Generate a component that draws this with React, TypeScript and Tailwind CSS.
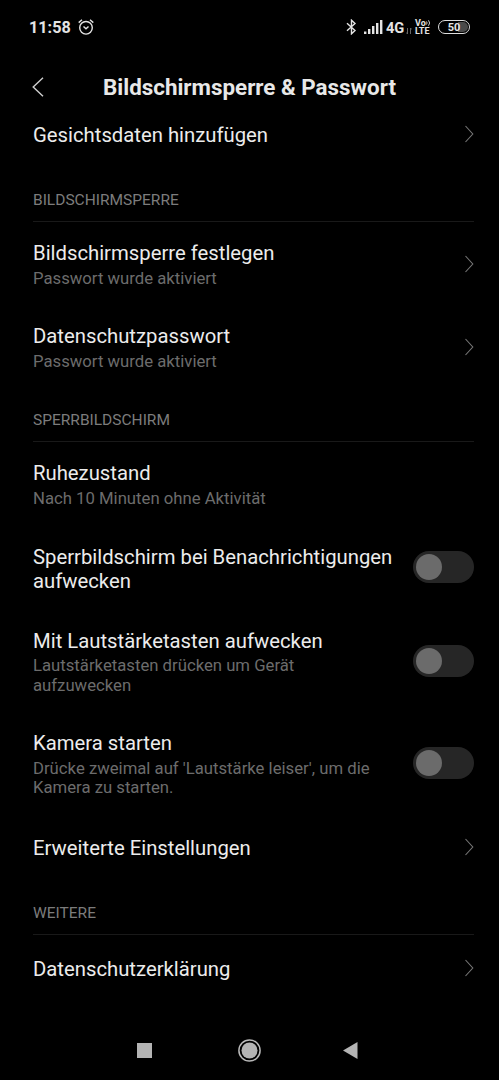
import { useState } from 'react'

type RowProps = {
  title: string
  text?: string
  className: string
}

const Chevron = () => (
  <svg className="mb-[2px] h-[18px] w-[10px] shrink-0" viewBox="0 0 10 18" fill="none" stroke="#777777" strokeWidth="1.1">
    <path d="M1.5 1L8.8 9L1.5 17" />
  </svg>
)

const RowText = ({ title, text }: { title: string; text?: string }) => (
  <div className="min-w-0">
    <h2 className="text-[20.3px] leading-6 text-[#ececec]">{title}</h2>
    {text && <p className="mt-[3.5px] text-[16.72px] leading-[19.5px] text-[#6c6c6c]">{text}</p>}
  </div>
)

const LinkRow = ({ title, text, className }: RowProps) => (
  <div className={`flex shrink-0 items-center justify-between ${className}`}>
    <RowText title={title} text={text} />
    <Chevron />
  </div>
)

const SwitchRow = ({ title, text, className }: RowProps) => {
  const [on, setOn] = useState(false)

  return (
    <div className={`flex shrink-0 items-center justify-between ${className}`}>
      <div className="w-[362px] pt-[3px]">
        <RowText title={title} text={text} />
      </div>
      <button
        type="button"
        role="switch"
        aria-checked={on}
        aria-label={title}
        onClick={() => setOn(!on)}
        className={`flex h-8 w-[61px] shrink-0 items-center rounded-full bg-[#262626] px-[3px] ${on ? 'justify-end' : 'justify-start'}`}
      >
        <span className="h-[26px] w-[26px] rounded-full bg-[#6b6b6b]" />
      </button>
    </div>
  )
}

const Section = ({ label }: { label: string }) => (
  <div className="flex h-[54px] shrink-0 items-end border-b border-[#191919] pb-[11px]">
    <h3 className="text-[15.5px] leading-5 text-[#7c7c7c]">{label}</h3>
  </div>
)

const StatusBar = () => (
  <div className="flex h-[54px] shrink-0 items-center justify-between pr-[29px] pl-[29px] text-[#e4e4e4]">
    <div className="flex items-center gap-[7px]">
      <span className="pt-px text-[16.2px] leading-5 font-bold">11:58</span>
      <svg className="h-4 w-4" viewBox="0 0 16 16" fill="none" stroke="currentColor" strokeWidth="1.4">
        <circle cx="8" cy="8.8" r="6.3" />
        <path d="M5.5 7.4L8 9.8L10.5 7.4M0.7 3.6L4 0.8M15.3 3.6L12 0.8" />
      </svg>
    </div>
    <div className="flex items-center">
      <svg className="h-4 w-[11px]" viewBox="0 0 11 16" fill="none" stroke="currentColor" strokeWidth="1.4">
        <path d="M1 4.2L9 11.5L5.5 14.8V1.2L9 4.5L1 11.8" />
      </svg>
      <svg className="ml-[7px] h-[14px] w-[19px]" viewBox="0 0 19 14" fill="currentColor">
        <path d="M0 11.5h2.4V14H0zM4 9h2.4v5H4zM8 6h2.4v8H8zM12 3h2.4v11H12zM16 0h2.4v14H16z" />
      </svg>
      <span className="ml-[3px] w-[18px] pt-px text-[14.6px] leading-5 font-bold">4G</span>
      <svg className="mt-[7px] ml-[2px] h-[6px] w-[6px]" viewBox="0 0 6 6" fill="none" stroke="#666666" strokeWidth="1">
        <path d="M1.5 0V6M0.2 4.5L1.5 6M4.5 6V0M5.8 1.5L4.5 0" />
      </svg>
      <div className="ml-[3px] flex w-[16px] flex-col text-[9px] leading-[8px] font-bold">
        <span className="flex items-center">
          Vo
          <svg className="h-[6px] w-[5px] shrink-0" viewBox="0 0 5 6" fill="none" stroke="currentColor" strokeWidth="0.9">
            <path d="M0.5 1.5Q1.7 3 0.5 4.5M2.5 0.3Q4.8 3 2.5 5.7" />
          </svg>
        </span>
        <span>LTE</span>
      </div>
      <div className="ml-[7px] flex h-[14px] w-[32px] items-center justify-center rounded-full border-[1.5px] border-[#dddddd] p-[1px]">
        <span className="flex h-full w-full items-center justify-center rounded-full bg-linear-to-r from-black from-65% to-[#4a4a4a] to-65% text-[11px] leading-none font-bold">50</span>
      </div>
    </div>
  </div>
)

const NavBar = () => (
  <div className="mt-auto flex h-[60px] shrink-0 items-center pl-[137px]">
    <div className="h-[15px] w-[15px] bg-[#b4b4b4]" />
    <svg className="ml-[86px] h-[23px] w-[23px]" viewBox="0 0 23 23">
      <circle cx="11.5" cy="11.5" r="10.6" fill="none" stroke="#b8b8b8" strokeWidth="1.5" />
      <circle cx="11.5" cy="11.5" r="8" fill="#b4b4b4" />
    </svg>
    <svg className="ml-[82px] h-[17px] w-[15px]" viewBox="0 0 15 17" fill="#b4b4b4">
      <path d="M0 8.5L14.5 0V17Z" />
    </svg>
  </div>
)

const App = () => {
  return (
    <div className="flex h-[1080px] w-[499px] flex-col overflow-hidden bg-black font-['Roboto',sans-serif]">
      <StatusBar />
      <header className="flex h-[66px] shrink-0 items-center pl-8">
        <svg className="h-5 w-3" viewBox="0 0 12 20" fill="none" stroke="#cfcfcf" strokeWidth="1.4">
          <path d="M11 0.7L1.2 10L11 19.3" />
        </svg>
        <h1 className="w-[411px] text-center text-[22.4px] leading-6 font-bold text-[#e8e8e8]">
          Bildschirmsperre &amp; Passwort
        </h1>
      </header>
      <main className="flex flex-col pr-[25px] pl-[33px]">
        <LinkRow title="Gesichtsdaten hinzufügen" className="h-12 pb-[18px]" />

        <Section label="BILDSCHIRMSPERRE" />
        <LinkRow title="Bildschirmsperre festlegen" text="Passwort wurde aktiviert" className="h-[83px] pt-[2px]" />
        <LinkRow title="Datenschutzpasswort" text="Passwort wurde aktiviert" className="h-[83px] pt-[2px]" />

        <Section label="SPERRBILDSCHIRM" />
        <div className="flex h-[83px] shrink-0 items-center pt-[2px]">
          <RowText title="Ruhezustand" text="Nach 10 Minuten ohne Aktivität" />
        </div>
        <SwitchRow title="Sperrbildschirm bei Benachrichtigungen aufwecken" className="h-[84px]" />
        <SwitchRow
          title="Mit Lautstärketasten aufwecken"
          text="Lautstärketasten drücken um Gerät aufzuwecken"
          className="h-[103px]"
        />
        <SwitchRow
          title="Kamera starten"
          text="Drücke zweimal auf 'Lautstärke leiser', um die Kamera zu starten."
          className="h-[102px]"
        />
        <LinkRow title="Erweiterte Einstellungen" className="h-[67px]" />

        <Section label="WEITERE" />
        <LinkRow title="Datenschutzerklärung" className="h-[67px]" />
      </main>
      <NavBar />
    </div>
  )
}

export default App
